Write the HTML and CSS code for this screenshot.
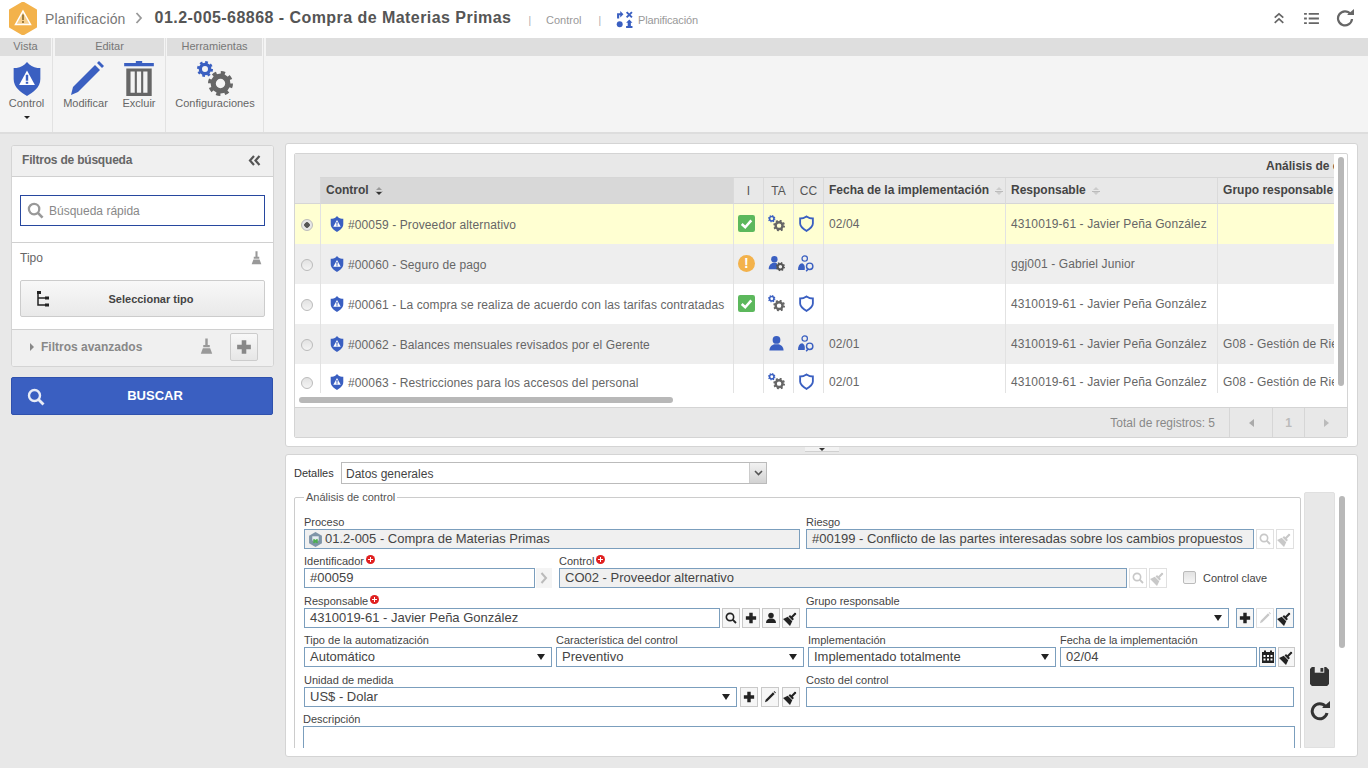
FILE: index.html
```html
<!DOCTYPE html>
<html lang="es">
<head>
    <meta charset="UTF-8">
    <title>Planificación</title>
    <link rel="stylesheet" href="styles.css">
</head>
<body>
    <svg class="sprites" width="0" height="0">
        <symbol id="i-shield" viewBox="0 0 24 28">
            <path d="M12 0L14 2C16 4 20 5 23 5V14C23 21 17 25 12 28C7 25 1 21 1 14V5C4 5 8 4 10 2Z" fill="#3a5fc1"/>
            <path d="M12 7L18.5 19H5.5Z" fill="#fff"/>
            <path d="M11 10.5H13V15.5H11ZM11 16.3H13V18H11Z" fill="#3a5fc1"/>
        </symbol>
        <symbol id="i-shield-o" viewBox="0 0 24 24">
            <path d="M12 2C15 4 18 5 21 5V12C21 17 16 20 12 22.500C8 20 3 17 3 12V5C6 5 9 4 12 2Z" fill="none" stroke="#3a5fc1" stroke-width="2.600"/>
        </symbol>
        <symbol id="i-ok" viewBox="0 0 16 16">
            <rect width="16" height="16" rx="2" fill="#5cb85c"/>
            <path d="M3.500 8.500L6.800 11.500L12.500 5" fill="none" stroke="#fff" stroke-width="2.400"/>
        </symbol>
        <symbol id="i-gear" viewBox="0 0 24 24">
            <circle cx="12" cy="12" r="7" fill="none" stroke="currentColor" stroke-width="5"/>
            <circle cx="12" cy="12" r="10" fill="none" stroke="currentColor" stroke-width="4" stroke-dasharray="3.9 3.95"/>
        </symbol>
        <symbol id="i-gears" viewBox="0 0 36 36">
            <use href="#i-gear" x="0" y="0" width="16" height="16" color="#3a5fc1"/>
            <use href="#i-gear" x="11" y="10" width="25" height="25" color="#666"/>
        </symbol>
        <symbol id="i-user" viewBox="0 0 24 24">
            <circle cx="12" cy="7" r="5.500" fill="currentColor"/>
            <path d="M2 22C2 16 6 14 9 13H15C18 14 22 16 22 22Z" fill="currentColor"/>
        </symbol>
        <symbol id="i-user-gear" viewBox="0 0 24 24">
            <circle cx="9" cy="6" r="4.500" fill="#3a5fc1"/>
            <path d="M1 20C1 14 5 12 7 11H11C13 12 14 13 14 20Z" fill="#3a5fc1"/>
            <use href="#i-gear" x="11" y="10" width="13" height="13" color="#555"/>
        </symbol>
        <symbol id="i-user-search" viewBox="0 0 24 24">
            <circle cx="9.500" cy="5" r="3.800" fill="none" stroke="#3a5fc1" stroke-width="1.800"/>
            <path d="M0 21C0 15 2 12 6 11.500C9 13 10 15 9.500 21Z" fill="#3a5fc1"/>
            <circle cx="16.500" cy="16" r="4.500" fill="none" stroke="#3a5fc1" stroke-width="2"/>
            <path d="M14 20L11.500 23" stroke="#3a5fc1" stroke-width="2.200"/>
        </symbol>
        <symbol id="i-search" viewBox="0 0 18 18">
            <circle cx="7.500" cy="7.500" r="5.500" fill="none" stroke="currentColor" stroke-width="2.400"/>
            <path d="M11.500 11.500L16.500 16.500" stroke="currentColor" stroke-width="2.800"/>
        </symbol>
        <symbol id="i-brush" viewBox="0 0 16 20">
            <path d="M6.500 0H9.500V8H12V11H4V8H6.500Z" fill="currentColor"/>
            <path d="M3.500 12H12.500L15 19H1Z" fill="currentColor"/>
        </symbol>
        <symbol id="i-plus" viewBox="0 0 14 14">
            <path d="M5 1H9V5H13V9H9V13H5V9H1V5H5Z" fill="currentColor"/>
        </symbol>
        <symbol id="i-pencil" viewBox="0 0 36 36">
            <path d="M27 4L32 9L10 31L3 34L5 26Z" fill="currentColor"/>
            <path d="M29 2L31 0L36 5L34 7Z" fill="currentColor"/>
        </symbol>
        <symbol id="i-trash" viewBox="0 0 28 34">
            <path d="M11 0H17V2H28V5H0V2H11Z" fill="#3a5fc1"/>
            <path d="M2 7H26V33H2ZM6 10V30H10V10ZM12 10V30H16V10ZM18 10V30H22V10Z" fill="#666" fill-rule="evenodd"/>
        </symbol>
    </svg>

    <header class="topbar">
        <svg class="logo" viewBox="0 0 30 33">
            <path d="M15 0.500L28 8V25L15 32.500L2 25V8Z" fill="#f3b24b" stroke="#f3b24b" stroke-width="2" stroke-linejoin="round"/>
            <path d="M15 9L22.500 22.500H7.500Z" fill="#f7cf8d" stroke="#fff" stroke-width="1.500"/>
            <path d="M14.200 12.500H15.800V18H14.200ZM14.200 19H15.800V21H14.200Z" fill="#8a6a2c"/>
        </svg>
        <span class="crumb">Planificación</span>
        <svg class="crumb-sep" viewBox="0 0 8 12"><path d="M1.500 1L6 6L1.500 11" fill="none" stroke="#999" stroke-width="1.800"/></svg>
        <h1 class="page-title">01.2-005-68868 - Compra de Materias Primas</h1>
        <span class="top-sep">|</span>
        <span class="top-link">Control</span>
        <span class="top-sep">|</span>
        <svg class="plan-icon" viewBox="0 0 16 16">
            <path d="M1 7V2H4V0L7 3L4 6V4H3V7Z" fill="#3a5fc1"/>
            <path d="M10 1L15 6M15 1L10 6" stroke="#3a5fc1" stroke-width="1.800"/>
            <circle cx="3.500" cy="12.500" r="2.800" fill="#3a5fc1"/>
            <path d="M12.500 8L15.500 11H14V14H15.500V16H9.500V14H11V11H9.500Z" fill="#3a5fc1"/>
        </svg>
        <span class="top-link top-link-small">Planificación</span>
        <div class="top-actions">
            <svg class="top-icon icon-up" viewBox="0 0 14 14"><path d="M2 6L7 1.500L12 6M2 12L7 7.500L12 12" fill="none" stroke="#666" stroke-width="2"/></svg>
            <svg class="top-icon icon-list" viewBox="0 0 16 14"><path d="M0 2H3M5 2H16M0 7H3M5 7H16M0 12H3M5 12H16" stroke="#666" stroke-width="2"/></svg>
            <svg class="top-icon icon-reload" viewBox="0 0 18 18"><path d="M14.500 5A7 7 0 1 0 16 10" fill="none" stroke="#666" stroke-width="2.200"/><path d="M11 6H18V0Z" fill="#666"/></svg>
        </div>
    </header>

    <nav class="ribbon">
        <div class="ribbon-group group-view">
            <div class="ribbon-title">Vista</div>
            <div class="ribbon-tools">
                <div class="ribbon-btn">
                    <svg class="ribbon-icon shield-big"><use href="#i-shield"/></svg>
                    <span>Control</span>
                    <i class="caret"></i>
                </div>
            </div>
        </div>
        <div class="ribbon-group group-edit">
            <div class="ribbon-title">Editar</div>
            <div class="ribbon-tools">
                <div class="ribbon-btn btn-edit">
                    <svg class="ribbon-icon blue"><use href="#i-pencil"/></svg>
                    <span>Modificar</span>
                </div>
                <div class="ribbon-btn btn-delete">
                    <svg class="ribbon-icon"><use href="#i-trash"/></svg>
                    <span>Excluir</span>
                </div>
            </div>
        </div>
        <div class="ribbon-group group-tools">
            <div class="ribbon-title">Herramientas</div>
            <div class="ribbon-tools">
                <div class="ribbon-btn btn-config">
                    <svg class="ribbon-icon"><use href="#i-gears"/></svg>
                    <span>Configuraciones</span>
                </div>
            </div>
        </div>
        <div class="ribbon-fill">
            <div class="ribbon-title"></div>
        </div>
    </nav>

    <main class="workspace">
        <aside class="sidebar">
            <div class="filters">
                <div class="filters-head">
                    <span>Filtros de búsqueda</span>
                    <svg class="collapse" viewBox="0 0 13 11"><path d="M6 1L2 5.500L6 10M11.500 1L7.500 5.500L11.500 10" fill="none" stroke="#555" stroke-width="2.200"/></svg>
                </div>
                <div class="filters-search">
                    <div class="quick-search">
                        <svg class="quick-icon"><use href="#i-search"/></svg>
                        <span>Búsqueda rápida</span>
                    </div>
                </div>
                <div class="filters-type">
                    <div class="type-head">
                        <span>Tipo</span>
                        <svg class="brush-small"><use href="#i-brush"/></svg>
                    </div>
                    <div class="type-btn">
                        <svg class="tree-icon" viewBox="0 0 12 16"><path d="M1 1V14H11M1 7H11" fill="none" stroke="#222" stroke-width="1.500"/><path d="M0 0H4V3H0ZM8 5.500H12V8.500H8ZM8 12.500H12V15.500H8Z" fill="#222"/></svg>
                        <span>Seleccionar tipo</span>
                    </div>
                </div>
                <div class="filters-adv">
                    <i class="adv-arrow"></i>
                    <span>Filtros avanzados</span>
                    <svg class="brush-adv"><use href="#i-brush"/></svg>
                    <div class="adv-add"><svg><use href="#i-plus"/></svg></div>
                </div>
            </div>
            <div class="search-btn">
                <svg><use href="#i-search"/></svg>
                <span>BUSCAR</span>
            </div>
        </aside>

        <section class="content">
            <div class="list-panel">
                <div class="grid">
                    <div class="grid-view">
                        <table class="grid-table">
                            <colgroup>
                                <col class="col-radio"><col class="col-control"><col class="col-icon"><col class="col-icon"><col class="col-icon"><col class="col-date"><col class="col-owner"><col class="col-group">
                            </colgroup>
                            <thead>
                                <tr class="head-groups">
                                    <th class="head-blank"></th>
                                    <th colspan="6"></th>
                                    <th class="group-label"><div>Análisis de control</div></th>
                                </tr>
                                <tr class="head-cols">
                                    <th class="head-blank"></th>
                                    <th class="sorted">Control <i class="sort sort-down"></i></th>
                                    <th class="center">I</th>
                                    <th class="center">TA</th>
                                    <th class="center">CC</th>
                                    <th>Fecha de la implementación <i class="sort"></i></th>
                                    <th>Responsable <i class="sort"></i></th>
                                    <th class="clip">Grupo responsable</th>
                                </tr>
                            </thead>
                            <tbody>
                                <tr class="row-selected">
                                    <td class="center"><i class="radio radio-on"></i></td>
                                    <td><div class="name"><svg class="shield-small"><use href="#i-shield"/></svg>#00059 - Proveedor alternativo</div></td>
                                    <td class="center"><svg class="cell-icon"><use href="#i-ok"/></svg></td>
                                    <td class="center"><svg class="cell-icon"><use href="#i-gears"/></svg></td>
                                    <td class="center"><svg class="cell-icon"><use href="#i-shield-o"/></svg></td>
                                    <td>02/04</td>
                                    <td>4310019-61 - Javier Peña González</td>
                                    <td></td>
                                </tr>
                                <tr class="row-alt">
                                    <td class="center"><i class="radio"></i></td>
                                    <td><div class="name"><svg class="shield-small"><use href="#i-shield"/></svg>#00060 - Seguro de pago</div></td>
                                    <td class="center"><i class="status-warn">!</i></td>
                                    <td class="center"><svg class="cell-icon"><use href="#i-user-gear"/></svg></td>
                                    <td class="center"><svg class="cell-icon"><use href="#i-user-search"/></svg></td>
                                    <td></td>
                                    <td>ggj001 - Gabriel Junior</td>
                                    <td></td>
                                </tr>
                                <tr>
                                    <td class="center"><i class="radio"></i></td>
                                    <td><div class="name"><svg class="shield-small"><use href="#i-shield"/></svg>#00061 - La compra se realiza de acuerdo con las tarifas contratadas</div></td>
                                    <td class="center"><svg class="cell-icon"><use href="#i-ok"/></svg></td>
                                    <td class="center"><svg class="cell-icon"><use href="#i-gears"/></svg></td>
                                    <td class="center"><svg class="cell-icon"><use href="#i-shield-o"/></svg></td>
                                    <td></td>
                                    <td>4310019-61 - Javier Peña González</td>
                                    <td></td>
                                </tr>
                                <tr class="row-alt">
                                    <td class="center"><i class="radio"></i></td>
                                    <td><div class="name"><svg class="shield-small"><use href="#i-shield"/></svg>#00062 - Balances mensuales revisados por el Gerente</div></td>
                                    <td class="center"></td>
                                    <td class="center"><svg class="cell-icon blue"><use href="#i-user"/></svg></td>
                                    <td class="center"><svg class="cell-icon"><use href="#i-user-search"/></svg></td>
                                    <td>02/01</td>
                                    <td>4310019-61 - Javier Peña González</td>
                                    <td class="clip">G08 - Gestión de Riesgos</td>
                                </tr>
                                <tr class="row-last">
                                    <td class="center"><i class="radio"></i></td>
                                    <td><div class="name"><svg class="shield-small"><use href="#i-shield"/></svg>#00063 - Restricciones para los accesos del personal</div></td>
                                    <td class="center"></td>
                                    <td class="center"><svg class="cell-icon"><use href="#i-gears"/></svg></td>
                                    <td class="center"><svg class="cell-icon"><use href="#i-shield-o"/></svg></td>
                                    <td>02/01</td>
                                    <td>4310019-61 - Javier Peña González</td>
                                    <td class="clip">G08 - Gestión de Riesgos</td>
                                </tr>
                            </tbody>
                        </table>
                    </div>
                    <div class="scroll-x"><div class="thumb-x"></div></div>
                    <div class="scroll-y"></div>
                    <div class="grid-foot">
                        <span class="total">Total de registros: 5</span>
                        <div class="pager"><i class="page-prev"></i></div>
                        <div class="pager pager-num">1</div>
                        <div class="pager"><i class="page-next"></i></div>
                    </div>
                </div>
            </div>

            <div class="splitter"><div class="split-handle"></div></div>

            <div class="detail-panel">
                <div class="detail-body">
                    <div class="detail-main">
                        <div class="detail-select">
                            <label>Detalles</label>
                            <div class="combo">
                                <span>Datos generales</span>
                                <div class="combo-btn"><svg viewBox="0 0 9 6"><path d="M1 1L4.500 4.500L8 1" fill="none" stroke="#555" stroke-width="1.600"/></svg></div>
                            </div>
                        </div>
                        <fieldset class="analysis">
                            <legend>Análisis de control</legend>

                            <div class="form-row">
                                <div class="field w-process">
                                    <label>Proceso</label>
                                    <div class="input readonly"><svg class="proc-icon" viewBox="0 0 14 14"><path d="M7 0L13 3.500V10.500L7 14L1 10.500V3.500Z" fill="#7f95a8"/><path d="M4 4H10V8H4Z" fill="#e6edf2"/><path d="M5 10L9 7M5 7L9 10" stroke="#4caf50" stroke-width="1.600"/></svg>01.2-005 - Compra de Materias Primas</div>
                                </div>
                                <div class="field w-risk">
                                    <label>Riesgo</label>
                                    <div class="input-line">
                                        <div class="input readonly">#00199 - Conflicto de las partes interesadas sobre los cambios propuestos</div>
                                        <div class="tool off"><svg><use href="#i-search"/></svg></div>
                                        <div class="tool off"><svg class="diag"><use href="#i-brush"/></svg></div>
                                    </div>
                                </div>
                            </div>

                            <div class="form-row row-wide">
                                <div class="field w-id">
                                    <label>Identificador<i class="req"></i></label>
                                    <div class="input-line">
                                        <div class="input">#00059</div>
                                        <div class="next-btn"><svg viewBox="0 0 8 12"><path d="M1.500 1L6 6L1.500 11" fill="none" stroke="#bbb" stroke-width="2"/></svg></div>
                                    </div>
                                </div>
                                <div class="field w-control">
                                    <label>Control<i class="req"></i></label>
                                    <div class="input-line">
                                        <div class="input readonly">CO02 - Proveedor alternativo</div>
                                        <div class="tool off"><svg><use href="#i-search"/></svg></div>
                                        <div class="tool off"><svg class="diag"><use href="#i-brush"/></svg></div>
                                    </div>
                                </div>
                                <label class="key-check"><i class="checkbox"></i>Control clave</label>
                            </div>

                            <div class="form-row">
                                <div class="field w-owner">
                                    <label>Responsable<i class="req"></i></label>
                                    <div class="input-line">
                                        <div class="input">4310019-61 - Javier Peña González</div>
                                        <div class="tool"><svg><use href="#i-search"/></svg></div>
                                        <div class="tool"><svg><use href="#i-plus"/></svg></div>
                                        <div class="tool"><svg><use href="#i-user"/></svg></div>
                                        <div class="tool"><svg class="diag"><use href="#i-brush"/></svg></div>
                                    </div>
                                </div>
                                <div class="field w-group">
                                    <label>Grupo responsable</label>
                                    <div class="input-line">
                                        <div class="input select"></div>
                                        <div class="tool tool-blue tool-first"><svg><use href="#i-plus"/></svg></div>
                                        <div class="tool off"><svg><use href="#i-pencil"/></svg></div>
                                        <div class="tool tool-blue"><svg class="diag"><use href="#i-brush"/></svg></div>
                                    </div>
                                </div>
                            </div>

                            <div class="form-row row-wide tight">
                                <div class="field w-quarter">
                                    <label>Tipo de la automatización</label>
                                    <div class="input select">Automático</div>
                                </div>
                                <div class="field w-quarter">
                                    <label>Característica del control</label>
                                    <div class="input select">Preventivo</div>
                                </div>
                                <div class="field w-quarter">
                                    <label>Implementación</label>
                                    <div class="input select">Implementado totalmente</div>
                                </div>
                                <div class="field w-date">
                                    <label>Fecha de la implementación</label>
                                    <div class="input-line">
                                        <div class="input">02/04</div>
                                        <div class="tool tool-blue tool-cal"><svg viewBox="0 0 14 14"><path d="M1 2H13V13H1Z" fill="#222"/><path d="M2.500 5H4.500V7H2.500ZM6 5H8V7H6ZM9.500 5H11.500V7H9.500ZM2.500 8.500H4.500V10.500H2.500ZM6 8.500H8V10.500H6ZM9.500 8.500H11.500V10.500H9.500Z" fill="#fff"/><path d="M3 0.500H5V3H3ZM9 0.500H11V3H9Z" fill="#222"/></svg></div>
                                        <div class="tool tool-cal"><svg class="diag"><use href="#i-brush"/></svg></div>
                                    </div>
                                </div>
                            </div>

                            <div class="form-row">
                                <div class="field w-unit">
                                    <label>Unidad de medida</label>
                                    <div class="input-line">
                                        <div class="input select">US$ - Dolar</div>
                                        <div class="tool"><svg><use href="#i-plus"/></svg></div>
                                        <div class="tool"><svg><use href="#i-pencil"/></svg></div>
                                        <div class="tool"><svg class="diag"><use href="#i-brush"/></svg></div>
                                    </div>
                                </div>
                                <div class="field w-cost">
                                    <label>Costo del control</label>
                                    <div class="input"></div>
                                </div>
                            </div>

                            <div class="form-row desc-row">
                                <div class="field w-desc">
                                    <label>Descripción</label>
                                    <div class="input desc"></div>
                                </div>
                            </div>
                        </fieldset>
                    </div>

                    <div class="detail-tools">
                        <svg class="save-icon" viewBox="0 0 20 20"><path d="M2 0H17L20 3V18L18 20H2L0 18V2Z" fill="#333"/><path d="M5 0H15V6H5Z" fill="#e8e8e8"/><path d="M11 1H14V5H11Z" fill="#333"/></svg>
                        <svg class="reload-icon" viewBox="0 0 20 20"><path d="M15.500 5.500A7.500 7.500 0 1 0 17 12" fill="none" stroke="#333" stroke-width="3"/><path d="M12 7H20V0Z" fill="#333"/></svg>
                    </div>
                    <div class="detail-scroll"></div>
                </div>
            </div>
        </section>
    </main>
</body>
</html>
```
FILE: styles.css
```css
* {
    box-sizing: border-box;
}

html, body {
    height: 100%;
}

body {
    margin: 0;
    display: flex;
    flex-direction: column;
    overflow: hidden;
    background: #e8e8e8;
    color: #555;
    font-family: "Liberation Sans", Arial, sans-serif;
    font-size: 12px;
}

.sprites {
    position: absolute;
}

.blue {
    color: #3a5fc1;
}

/* top bar */
.topbar {
    height: 38px;
    flex: none;
    display: flex;
    align-items: center;
    background: #fff;
    padding: 0 14px 2px 8px;
}

.logo {
    width: 30px;
    height: 33px;
    margin-right: 7px;
}

.crumb {
    margin-top: 2px;
    font-size: 14px;
    letter-spacing: 0.15px;
    color: #777;
}

.crumb-sep {
    width: 8px;
    height: 12px;
    margin: 0 12px 0 9px;
}

.page-title {
    margin: 0;
    font-size: 16px;
    letter-spacing: 0.45px;
    font-weight: bold;
    color: #555;
}

.top-sep {
    margin: 4px 15px 0 17px;
    font-size: 10px;
    color: #aaa;
}

.top-link {
    margin-top: 4px;
    font-size: 11px;
    color: #999;
}

.top-link-small {
    letter-spacing: -0.15px;
}

.plan-icon {
    width: 17px;
    height: 17px;
    margin: 2px 5px 0 0;
}

.top-actions {
    margin-left: auto;
    display: flex;
    align-items: center;
}

.top-icon {
    height: 13px;
}

.icon-up {
    width: 12px;
    margin-right: 19px;
}

.icon-list {
    width: 15px;
    margin-right: 17px;
}

.icon-reload {
    width: 18px;
    height: 18px;
}

/* ribbon */
.ribbon {
    height: 96px;
    flex: none;
    display: flex;
    background: #f4f4f4;
    border-bottom: 2px solid #ddd;
}

.ribbon-group {
    display: flex;
    flex-direction: column;
    border-right: 1px solid #e2e2e2;
}

.group-view {
    width: 53px;
}

.group-view .ribbon-title {
    margin-left: 0;
}

.group-edit {
    width: 113px;
}

.group-edit .ribbon-title {
    margin-left: 2px;
}

.group-tools {
    width: 98px;
}

.ribbon-fill {
    flex: 1;
}

.ribbon-title {
    height: 18px;
    margin: 0 1px;
    background: #dedede;
    color: #777;
    font-size: 11px;
    line-height: 17px;
    text-align: center;
}

.ribbon-fill .ribbon-title {
    margin: 0 0 0 2px;
}

.ribbon-tools {
    display: flex;
    padding: 5px 0 0 1px;
}

.ribbon-btn {
    flex: 1;
    display: flex;
    flex-direction: column;
    align-items: center;
    font-size: 11px;
    color: #666;
    white-space: nowrap;
}

.btn-edit {
    flex: 0 0 62px;
    padding-left: 1px;
}

.btn-delete {
    flex: 0 0 46px;
}

.ribbon-icon {
    width: 36px;
    height: 36px;
}

.shield-big {
    width: 30px;
    height: 34px;
    margin-top: 1px;
    margin-bottom: 1px;
}

.caret {
    width: 0;
    height: 0;
    margin-top: 7px;
    border-left: 3px solid transparent;
    border-right: 3px solid transparent;
    border-top: 3px solid #222;
}

/* layout */
.workspace {
    flex: 1;
    min-height: 0;
    display: flex;
    gap: 11px;
    padding: 9px 10px 11px 11px;
}

.sidebar {
    width: 263px;
    flex: none;
    margin-top: 2px;
}

.content {
    flex: 1;
    min-width: 0;
    display: flex;
    flex-direction: column;
}

/* filters */
.filters {
    height: 222px;
    background: #fff;
    border: 1px solid #d4d4d4;
    border-radius: 3px;
    overflow: hidden;
}

.filters-head {
    height: 31px;
    display: flex;
    align-items: center;
    justify-content: space-between;
    padding: 0 12px 2px 10px;
    background: #f0f0f0;
    border-bottom: 1px solid #d0d0d0;
    font-weight: bold;
    letter-spacing: -0.2px;
    color: #666;
}

.collapse {
    width: 13px;
    height: 11px;
}

.filters-search {
    height: 66px;
    padding: 18px 8px 0;
    border-bottom: 1px solid #d0d0d0;
}

.quick-search {
    height: 31px;
    display: flex;
    align-items: center;
    gap: 5px;
    padding-left: 6px;
    border: 1px solid #27479f;
    color: #888;
}

.quick-icon {
    width: 17px;
    height: 17px;
    color: #999;
}

.filters-type {
    height: 87px;
    padding: 0 8px;
    border-bottom: 1px solid #d0d0d0;
}

.type-head {
    height: 37px;
    display: flex;
    align-items: center;
    justify-content: space-between;
    padding: 0 3px 8px 0;
    color: #666;
}

.brush-small {
    width: 11px;
    height: 16px;
    color: #999;
}

.type-btn {
    position: relative;
    height: 37px;
    display: flex;
    align-items: center;
    justify-content: center;
    padding-left: 17px;
    border: 1px solid #ccc;
    border-radius: 2px;
    background: linear-gradient(#f8f8f8, #e9e9e9);
    font-size: 11px;
    font-weight: bold;
    color: #444;
}

.tree-icon {
    position: absolute;
    left: 16px;
    top: 10px;
    width: 12px;
    height: 16px;
}

.filters-adv {
    height: 36px;
    display: flex;
    align-items: center;
    padding: 0 15px 3px 18px;
    background: #f0f0f0;
    font-weight: bold;
    color: #888;
}

.adv-arrow {
    width: 0;
    height: 0;
    margin-right: 7px;
    border-top: 4px solid transparent;
    border-bottom: 4px solid transparent;
    border-left: 4px solid #888;
}

.brush-adv {
    width: 13px;
    height: 17px;
    margin-left: auto;
    margin-right: 17px;
    color: #999;
}

.adv-add {
    width: 28px;
    height: 28px;
    display: flex;
    align-items: center;
    justify-content: center;
    border: 1px solid #ccc;
    border-radius: 2px;
    background: linear-gradient(#f8f8f8, #e6e6e6);
    color: #888;
}

.adv-add svg {
    width: 16px;
    height: 16px;
}

.search-btn {
    position: relative;
    width: 262px;
    height: 38px;
    margin-top: 10px;
    display: flex;
    align-items: center;
    justify-content: center;
    padding: 0 0 2px 26px;
    background: #3a5fc1;
    border: 1px solid #2f51ad;
    border-radius: 2px;
    color: #fff;
    font-size: 13px;
    font-weight: bold;
}

.search-btn svg {
    position: absolute;
    left: 15px;
    top: 10px;
    width: 18px;
    height: 18px;
    color: #e8ecf6;
}

/* list */
.list-panel {
    height: 304px;
    flex: none;
    padding: 9px 9px 9px 8px;
    background: #fff;
    border: 1px solid #d4d4d4;
    border-radius: 3px;
}

.grid {
    position: relative;
    height: 285px;
    border: 1px solid #d4d4d4;
    border-radius: 2px;
    overflow: hidden;
}

.grid-view {
    width: 1039px;
    height: 239px;
    overflow: hidden;
}

.grid-table {
    width: 1039px;
    table-layout: fixed;
    border-collapse: separate;
    border-spacing: 0;
}

.col-radio {
    width: 25px;
}

.col-control {
    width: 413px;
}

.col-icon {
    width: 30px;
}

.col-date {
    width: 182px;
}

.col-owner {
    width: 212px;
}

.col-group {
    width: 117px;
}

.grid-table th {
    padding: 0 5px;
    background: #e8e8e8;
    color: #444;
    text-align: left;
    white-space: nowrap;
    border-left: 1px solid #dadada;
}

.head-groups th {
    height: 24px;
    border-left: 0;
    border-bottom: 1px solid #d6d6d6;
}

.head-groups .head-blank {
    border-bottom: 0;
}

.head-cols th {
    height: 26px;
    border-bottom: 1px solid #d6d6d6;
    padding-bottom: 1px;
}

.head-cols .head-blank {
    border-left: 0;
}

.grid-table th.group-label {
    padding: 0 0 0 49px;
}

.group-label div {
    overflow: hidden;
}

.grid-table th.sorted {
    background: #d8d8d8;
}

.grid-table .center {
    padding: 0;
    text-align: center;
}

.grid-table th.center {
    font-weight: normal;
    color: #555;
}

.clip {
    overflow: hidden;
    white-space: nowrap;
}

.sort {
    display: inline-block;
    width: 8px;
    height: 8px;
    margin-left: 3px;
    vertical-align: -1px;
    background:
        linear-gradient(#bbb, #bbb) 0 3.500px / 8px 1px no-repeat;
    position: relative;
}

.sort::before {
    content: "";
    position: absolute;
    left: 1px;
    top: 0;
    border-left: 3px solid transparent;
    border-right: 3px solid transparent;
    border-bottom: 3px solid #ccc;
}

.sort::after {
    content: "";
    position: absolute;
    left: 1px;
    top: 5px;
    border-left: 3px solid transparent;
    border-right: 3px solid transparent;
    border-top: 3px solid #ccc;
}

.sort-down::after {
    border-top-color: #333;
}

.sort-down::before {
    border-bottom-color: #999;
}

.grid-table td {
    height: 40px;
    padding: 0 5px 1px;
    color: #666;
    letter-spacing: 0.11px;
    white-space: nowrap;
    background: #fff;
    border-left: 1px solid #e2e2e2;
}

.grid-table td:first-child {
    border-left: 0;
}

.row-alt td {
    background: #eee;
}

.row-selected td {
    background: #ffffd2;
}

.grid-table .row-last td {
    height: 36px;
}

.name {
    display: flex;
    align-items: center;
    padding: 3px 0 0 4px;
}

.shield-small {
    width: 14px;
    height: 16px;
    margin: -3px 4px 0 0;
    flex: none;
}

.radio {
    display: inline-block;
    width: 12px;
    height: 12px;
    margin-left: -1px;
    vertical-align: middle;
    border: 1px solid #bbb;
    border-radius: 50%;
    background: linear-gradient(#e2e2e2, #f4f4f4);
}

.radio-on {
    background: radial-gradient(circle, #555 0, #555 2.500px, #e6e6e6 3px);
}

.cell-icon {
    width: 17px;
    height: 17px;
    vertical-align: middle;
    margin: -1px 0 0 -4px;
}

.status-warn {
    display: inline-block;
    width: 17px;
    height: 17px;
    margin: -1px 0 0 -4px;
    vertical-align: middle;
    border-radius: 50%;
    background: #f3b24b;
    color: #fff;
    font-size: 14px;
    font-style: normal;
    font-weight: bold;
    line-height: 17px;
}

.scroll-x {
    width: 1039px;
    height: 14px;
    padding: 4px 0 0 4px;
    background: #fff;
}

.thumb-x {
    width: 374px;
    height: 6px;
    background: #b8b8b8;
    border-radius: 3px;
}

.scroll-y {
    position: absolute;
    top: 3px;
    left: 1043px;
    width: 6px;
    height: 229px;
    background: #b8b8b8;
    border-radius: 3px;
}

.grid-foot {
    height: 31px;
    display: flex;
    align-items: center;
    justify-content: flex-end;
    background: #e8e8e8;
    border-top: 1px solid #d4d4d4;
    color: #888;
}

.total {
    margin-right: 14px;
}

.pager {
    width: 43px;
    height: 100%;
    display: flex;
    align-items: center;
    justify-content: center;
    border-left: 1px solid #d6d6d6;
    font-weight: bold;
    color: #bbb;
}

.pager-num {
    width: 32px;
}

.page-prev,
.page-next {
    width: 0;
    height: 0;
    border-top: 4px solid transparent;
    border-bottom: 4px solid transparent;
}

.page-prev {
    border-right: 5px solid #aaa;
}

.page-next {
    border-left: 5px solid #bbb;
}

.splitter {
    height: 7px;
    flex: none;
    display: flex;
    justify-content: center;
}

.split-handle {
    position: relative;
    width: 34px;
    height: 5px;
    background: #f2f2f2;
    border-bottom: 1px solid #d0d0d0;
}

.split-handle::after {
    content: "";
    position: absolute;
    left: 14px;
    top: 1px;
    border-left: 3px solid transparent;
    border-right: 3px solid transparent;
    border-top: 3px solid #333;
}

/* detail */
.detail-panel {
    height: 303px;
    flex: none;
    padding: 7px 8px 9px;
    background: #fff;
    border: 1px solid #d4d4d4;
    border-radius: 3px;
}

.detail-body {
    height: 286px;
    display: flex;
    overflow: hidden;
}

.detail-main {
    width: 1007px;
    flex: none;
}

.detail-select {
    height: 29px;
    display: flex;
    align-items: flex-start;
}

.detail-select label {
    width: 47px;
    padding-top: 5px;
    font-size: 11px;
    color: #333;
}

.combo {
    width: 426px;
    height: 22px;
    display: flex;
    align-items: center;
    justify-content: space-between;
    padding-left: 4px;
    border: 1px solid #bbb;
    color: #444;
}

.combo span {
    padding-top: 1px;
}

.combo-btn {
    width: 17px;
    height: 100%;
    display: flex;
    align-items: center;
    justify-content: center;
    border-left: 1px solid #ccc;
    background: linear-gradient(#f2f2f2, #d2d2d2);
}

.combo-btn svg {
    width: 9px;
    height: 6px;
}

.analysis {
    margin: 0;
    padding: 13px 0 0 9px;
    min-width: 0;
    height: 290px;
    border: 1px solid #ccc;
    border-radius: 2px 2px 0 0;
}

.analysis legend {
    margin-left: 0;
    padding: 0 2px;
    font-size: 11px;
    color: #555;
}

.form-row {
    display: flex;
    align-items: flex-start;
    gap: 6px;
    margin-bottom: 6px;
}

.row-wide {
    margin-bottom: 7px;
}

.tight {
    gap: 4px;
}

.field label {
    display: block;
    height: 13px;
    font-size: 11px;
    line-height: 13px;
    color: #444;
}

.input {
    height: 20px;
    flex: 1;
    min-width: 0;
    display: flex;
    align-items: center;
    padding: 0 5px 2px;
    background: #fff;
    border: 1px solid #7b9ebd;
    font-size: 13px;
    color: #444;
    white-space: nowrap;
    overflow: hidden;
}

.proc-icon {
    width: 15px;
    height: 15px;
    flex: none;
    margin: 2px 2px 0 -2px;
}

.readonly {
    background: #f0f0f0;
}

.select {
    position: relative;
}

.select::after {
    content: "";
    position: absolute;
    right: 6px;
    top: 6px;
    border-left: 4px solid transparent;
    border-right: 4px solid transparent;
    border-top: 6px solid #222;
}

.input-line {
    display: flex;
    gap: 2px;
}

.tool {
    width: 18px;
    height: 20px;
    flex: none;
    display: flex;
    align-items: center;
    justify-content: center;
    border: 1px solid #c9c9c9;
    background: #f6f6f6;
    color: #222;
}

.tool svg {
    width: 12px;
    height: 12px;
}

.tool .diag {
    width: 12px;
    height: 14px;
    transform: rotate(45deg);
}

.tool.off {
    background: #fff;
    border-color: #e0e0e0;
    color: #c8c8c8;
}

.tool-blue {
    border-color: #7b9ebd;
}

.tool-first {
    margin-left: 5px;
}

.tool-cal {
    width: 17px;
}

.tool-cal svg {
    width: 14px;
    height: 14px;
}

.next-btn {
    width: 16px;
    height: 20px;
    flex: none;
    display: flex;
    align-items: center;
    justify-content: center;
    margin-left: -1px;
    background: #f4f4f4;
}

.next-btn svg {
    width: 8px;
    height: 12px;
}

.req {
    display: inline-block;
    width: 9px;
    height: 9px;
    margin-left: 2px;
    vertical-align: 1px;
    border-radius: 50%;
    background:
        linear-gradient(#fff, #fff) center / 5px 1px no-repeat,
        linear-gradient(#fff, #fff) center / 1px 5px no-repeat,
        #e02020;
}

.w-process {
    width: 496px;
}

.w-risk {
    width: 488px;
}

.w-id {
    width: 248px;
}

.w-control {
    width: 608px;
    margin-left: 1px;
}

.key-check {
    display: flex;
    align-items: center;
    gap: 7px;
    margin: 16px 0 0 10px;
    font-size: 11px;
    color: #444;
}

.checkbox {
    width: 13px;
    height: 13px;
    border: 1px solid #bbb;
    border-radius: 2px;
    background: linear-gradient(#e2e2e2, #f6f6f6);
}

.w-owner {
    width: 496px;
}

.w-group {
    width: 488px;
}

.w-quarter {
    width: 248px;
}

.w-date {
    width: 235px;
}

.w-unit {
    width: 496px;
}

.w-unit .input-line {
    gap: 3px;
}

.w-cost {
    width: 488px;
}

.w-desc {
    width: 992px;
    margin-left: -1px;
}

.desc {
    height: 60px;
}

.desc-row {
    margin-bottom: 0;
}

.detail-tools {
    width: 31px;
    height: 256px;
    flex: none;
    margin: 30px 0 0 3px;
    display: flex;
    flex-direction: column;
    align-items: center;
    padding-top: 174px;
    background: #e8e8e8;
    border: 1px solid #e0e0e0;
    border-radius: 2px 2px 0 0;
}

.save-icon {
    width: 19px;
    height: 19px;
    margin-bottom: 15px;
}

.reload-icon {
    width: 20px;
    height: 20px;
}

.detail-scroll {
    width: 6px;
    height: 152px;
    margin: 34px 0 0 4px;
    flex: none;
    background: #b8b8b8;
    border-radius: 3px;
}
```
